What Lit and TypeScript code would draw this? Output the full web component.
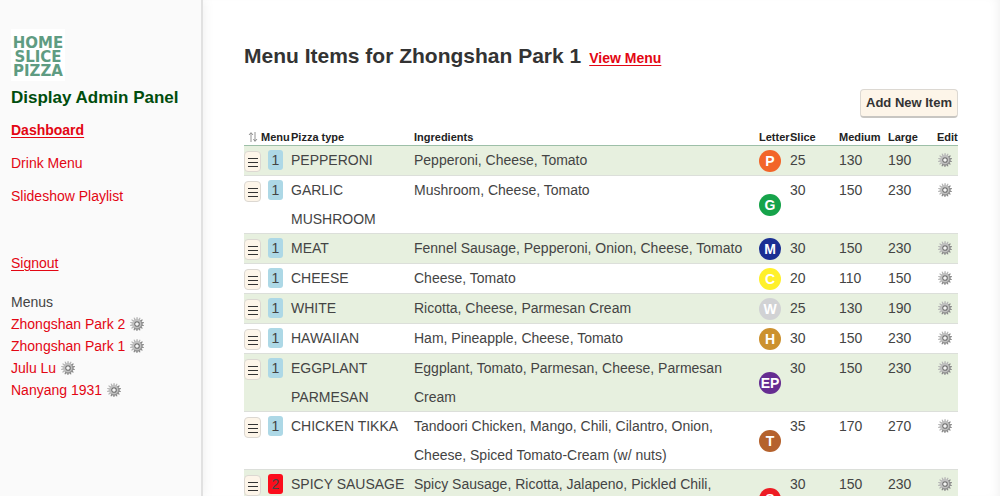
import { LitElement, html, css, svg } from "lit";
import { customElement, property } from "lit/decorators.js";

interface Item {
  menu: number;
  name: string;
  ingredients: string;
  letter: string;
  color: string;
  prices: number[];
  tall?: boolean;
}

const ITEMS: Item[] = [
  { menu: 1, name: "PEPPERONI", ingredients: "Pepperoni, Cheese, Tomato", letter: "P", color: "#f26529", prices: [25, 130, 190] },
  { menu: 1, name: "GARLIC MUSHROOM", ingredients: "Mushroom, Cheese, Tomato", letter: "G", color: "#16a34a", prices: [30, 150, 230] },
  { menu: 1, name: "MEAT", ingredients: "Fennel Sausage, Pepperoni, Onion, Cheese, Tomato", letter: "M", color: "#1b2f93", prices: [30, 150, 230] },
  { menu: 1, name: "CHEESE", ingredients: "Cheese, Tomato", letter: "C", color: "#fff02a", prices: [20, 110, 150] },
  { menu: 1, name: "WHITE", ingredients: "Ricotta, Cheese, Parmesan Cream", letter: "W", color: "#d1d2d4", prices: [25, 130, 190] },
  { menu: 1, name: "HAWAIIAN", ingredients: "Ham, Pineapple, Cheese, Tomato", letter: "H", color: "#cc912f", prices: [30, 150, 230] },
  { menu: 1, name: "EGGPLANT PARMESAN", ingredients: "Eggplant, Tomato, Parmesan, Cheese, Parmesan Cream", letter: "EP", color: "#662d91", prices: [30, 150, 230] },
  { menu: 1, name: "CHICKEN TIKKA", ingredients: "Tandoori Chicken, Mango, Chili, Cilantro, Onion, Cheese, Spiced Tomato-Cream (w/ nuts)", letter: "T", color: "#b5622d", prices: [35, 170, 270] },
  { menu: 2, name: "SPICY SAUSAGE", ingredients: "Spicy Sausage, Ricotta, Jalapeno, Pickled Chili,", letter: "S", color: "#ed1c24", prices: [30, 150, 230], tall: true },
];

const MENUS = ["Zhongshan Park 2", "Zhongshan Park 1", "Julu Lu", "Nanyang 1931"];

@customElement("gear-link")
class GearLink extends LitElement {
  @property() label = "";

  static styles = css`
    :host { display: inline-block; line-height: 0; }
    a { display: block; }
    svg { display: block; width: 14px; height: 14px; }
  `;

  render() {
    const teeth = Array.from({ length: 14 }, (_, i) => (i * 360) / 14);
    return html`<a href="#" aria-label=${this.label}>
      <svg viewBox="0 0 28 28">
        ${teeth.map((a) => svg`<path d="M13.2 0h1.8l1.2 7h-4.2z" fill=${a > 30 && a < 230 ? "#858585" : "#b5b5b5"} transform="rotate(${a} 14 14)"/>`)}
        <circle cx="14" cy="14" r="6.4" fill="none" stroke="#c0c0c0" stroke-width="6"/>
        <path d="M21.8 8.5A9.5 9.5 0 0 1 8.5 21.8" fill="none" stroke="#939393" stroke-width="2.4"/>
        <circle cx="14" cy="14" r="4.4" fill="none" stroke="#747474" stroke-width="2.6"/>
        <circle cx="14" cy="14" r="3.2" fill="#f4f4f4"/>
      </svg>
    </a>`;
  }
}

@customElement("side-panel")
class SidePanel extends LitElement {
  static styles = css`
    :host {
      display: block;
      box-sizing: border-box;
      padding: 29px 11px 0;
      background: #fafafa;
      border-right: 2px solid #e1e1e1;
      box-shadow: 0 0 12px rgba(0, 0, 0, 0.08);
    }
    a { color: #e30613; text-decoration: none; }
    .logo { display: block; width: 54px; height: 52px; background: #fff; }
    h2 { margin: 5px 0 0; font-size: 17px; line-height: 24px; color: #004d0d; white-space: nowrap; }
    nav { display: flex; flex-direction: column; align-items: flex-start; }
    .main { line-height: 33px; margin-top: 4px; }
    .main a.current { font-weight: bold; }
    a.current, a.out { text-decoration: underline; text-underline-offset: 2px; }
    .out { display: inline-block; line-height: 33px; margin-top: 34px; }
    h3 { margin: 11px 0 0; font-size: 14px; font-weight: normal; line-height: 22px; }
    ul { list-style: none; margin: 0; padding: 0; }
    li { display: flex; align-items: center; gap: 5px; line-height: 22px; }
  `;

  render() {
    return html`
      <svg class="logo" viewBox="0 0 54 52" role="img" aria-label="Home Slice Pizza"
        font-family="DejaVu Sans" font-weight="bold" font-size="15" fill="#5f9c82" text-anchor="middle">
        <text x="27" y="19">HOME</text>
        <text x="27" y="33">SLICE</text>
        <text x="27" y="47">PIZZA</text>
      </svg>
      <h2>Display Admin Panel</h2>
      <nav class="main">
        <a class="current" href="#">Dashboard</a>
        <a href="#">Drink Menu</a>
        <a href="#">Slideshow Playlist</a>
      </nav>
      <a class="out" href="#">Signout</a>
      <h3>Menus</h3>
      <ul>
        ${MENUS.map((m) => html`<li><a href="#">${m}</a><gear-link label="Edit ${m}"></gear-link></li>`)}
      </ul>
    `;
  }
}

@customElement("items-table")
class ItemsTable extends LitElement {
  static styles = css`
    :host { display: block; }
    table { width: 100%; table-layout: fixed; border-collapse: collapse; line-height: 29px; }
    th, td { padding: 0; text-align: left; vertical-align: top; }
    th { font-size: 11px; line-height: 18px; color: #222; white-space: nowrap; }
    thead tr { box-shadow: inset 0 -1px #9dbfa8; }
    tbody tr { height: 30px; box-shadow: inset 0 -1px #dcdfda; }
    tbody tr:nth-child(odd) { background: #e7f0df; }
    tbody tr.tall { height: 58px; }
    .c-handle { width: 17px; }
    .c-menu { width: 30px; }
    .c-name { width: 123px; }
    .c-letter { width: 31px; }
    .c-price { width: 49px; }
    .c-edit { width: 21px; }
    .center { text-align: center; }
    .ingredients { padding-right: 16px; }
    .middle { vertical-align: middle; }
    .sort { display: block; width: 10px; height: 10px; margin: 4px auto 0; }
    .handle {
      display: grid;
      place-items: center;
      box-sizing: border-box;
      width: 17px;
      height: 21px;
      margin-top: 5px;
      padding: 0;
      background: #fdf5e9;
      border: 1px solid #dcd8d2;
      border-radius: 4px;
    }
    .handle svg { display: block; width: 10px; height: 10px; }
    .badge {
      display: block;
      width: 15px;
      margin: 4px 0 0 7px;
      border-radius: 3px;
      line-height: 20px;
      background: #add8e6;
    }
    .badge.second { background: #fb0d1b; }
    .letter {
      display: block;
      width: 22px;
      margin-bottom: 1px;
      border-radius: 50%;
      line-height: 22px;
      text-align: center;
      font-weight: bold;
      color: #fff;
    }
    .edit gear-link { display: block; width: 14px; margin: 7px auto 0 1px; }
  `;

  render() {
    return html`
      <table>
        <colgroup>
          <col class="c-handle" /><col class="c-menu" /><col class="c-name" /><col />
          <col class="c-letter" /><col class="c-price" /><col class="c-price" /><col class="c-price" /><col class="c-edit" />
        </colgroup>
        <thead>
          <tr>
            <th aria-label="Order">
              <svg class="sort" viewBox="0 0 10 10" fill="none" stroke="#777" stroke-width="0.8">
                <path d="M3 10V1M1 3l2-2.4L5 3M7 0v9M5.4 7L7 9.4 9 7" />
              </svg>
            </th>
            <th>Menu</th><th>Pizza type</th><th>Ingredients</th><th>Letter</th>
            <th>Slice</th><th>Medium</th><th>Large</th><th>Edit</th>
          </tr>
        </thead>
        <tbody>
          ${ITEMS.map((it) => html`
            <tr class=${it.tall ? "tall" : ""}>
              <td>
                <button class="handle" aria-label="Move ${it.name}">
                  <svg viewBox="0 0 10 10" stroke="#333" stroke-width="1"><path d="M0 1.5h10M0 5.5h10M0 9.5h10" /></svg>
                </button>
              </td>
              <td class="center"><span class="badge ${it.menu === 2 ? "second" : ""}">${it.menu}</span></td>
              <td>${it.name}</td>
              <td class="ingredients">${it.ingredients}</td>
              <td class="middle"><span class="letter" style="background:${it.color}">${it.letter}</span></td>
              ${it.prices.map((p) => html`<td>${p}</td>`)}
              <td class="edit"><gear-link label="Edit ${it.name}"></gear-link></td>
            </tr>`)}
        </tbody>
      </table>
    `;
  }
}

@customElement("app-root")
class AppRoot extends LitElement {
  static styles = css`
    :host {
      display: grid;
      grid-template-columns: 203px minmax(0, 1fr);
      height: 100vh;
      background: #fff;
      color: #444;
      font: 14px/22px "Liberation Sans", Arial, sans-serif;
    }
    main {
      overflow-y: auto;
      scrollbar-width: none;
      padding: 42px 42px 0 41px;
      box-shadow: inset -8px 0 12px -8px rgba(0, 0, 0, 0.08);
    }
    side-panel { z-index: 1; }
    header { display: flex; align-items: baseline; gap: 8px; }
    h1 { margin: 0; font-size: 21px; line-height: 28px; color: #333; }
    header a { font-weight: bold; color: #e30613; text-underline-offset: 2px; }
    .actions { display: flex; justify-content: flex-end; margin: 19px 0 10px; }
    .add {
      padding: 0 5px;
      font: bold 13px/26px "Liberation Sans", Arial, sans-serif;
      color: #333;
      background: #fdf5e9;
      border: 1px solid #dcd8d2;
      border-bottom: 2px solid #c8c6c2;
      border-radius: 4px;
    }
  `;

  render() {
    return html`
      <side-panel></side-panel>
      <main>
        <header>
          <h1>Menu Items for Zhongshan Park 1</h1>
          <a href="#">View Menu</a>
        </header>
        <div class="actions"><button class="add">Add New Item</button></div>
        <items-table></items-table>
      </main>
    `;
  }
}
